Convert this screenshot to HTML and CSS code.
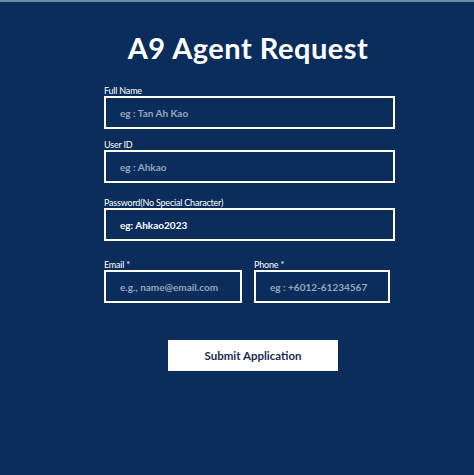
FILE: index.html
```html
<!DOCTYPE html>
<html>
<head>
<meta charset="utf-8">
<link rel="stylesheet" href="styles.css">
</head>
<body>
<div class="page">
  <h1 class="title">A9 Agent Request</h1>
  <form class="form">
    <div class="group g1">
      <label class="label">Full Name</label>
      <div class="field"><span class="ph">eg : Tan Ah Kao</span></div>
    </div>
    <div class="group g2">
      <label class="label">User ID</label>
      <div class="field"><span class="ph">eg : Ahkao</span></div>
    </div>
    <div class="group g3">
      <label class="label">Password(No Special Character)</label>
      <div class="field"><span class="val">eg: Ahkao2023</span></div>
    </div>
    <div class="row g4">
      <div class="group email">
        <label class="label">Email *</label>
        <div class="field"><span class="ph">e.g., name@email.com</span></div>
      </div>
      <div class="group phone">
        <label class="label">Phone *</label>
        <div class="field"><span class="ph">eg : +6012-61234567</span></div>
      </div>
    </div>
    <div class="actions">
      <button type="button" class="submit">Submit Application</button>
    </div>
  </form>
</div>
</body>
</html>
```
FILE: styles.css
```css
html, body {
  margin: 0;
  padding: 0;
  background: #0b2d5c;
}
body {
  border-top: 2px solid #7088aa;
  height: 473px;
  overflow: hidden;
  font-family: Lato, "Liberation Sans", sans-serif;
  color: #ffffff;
}
.page {
  padding-top: 29px;
}
.title {
  margin: 0 0 0 22px;
  text-align: center;
  font-size: 29px;
  line-height: 34px;
  font-weight: 700;
  letter-spacing: 0.5px;
}
.form {
  width: 291px;
  margin-left: 104px;
  margin-top: 20px;
}
.group {
  display: flex;
  flex-direction: column;
}
.label {
  font-size: 9px;
  line-height: 11px;
  font-weight: 400;
  color: #ffffff;
  letter-spacing: -0.2px;
}
.field {
  height: 29px;
  border: 2px solid #ffffff;
  display: flex;
  align-items: center;
  padding-left: 14px;
  font-size: 10px;
  font-weight: 700;
}
.ph {
  color: #97a6bd;
}
.val {
  color: #ffffff;
}
.g2 { margin-top: 10px; }
.g3 { margin-top: 14px; }
.g4 { margin-top: 18px; }
.row {
  display: flex;
  gap: 12px;
}
.email { width: 138px; }
.phone { width: 136px; }
.actions {
  margin-top: 37px;
  padding-left: 64px;
}
.submit {
  width: 170px;
  height: 31px;
  border: none;
  background: #ffffff;
  color: #1b2c50;
  font-family: Lato, "Liberation Sans", sans-serif;
  font-size: 11.5px;
  font-weight: 700;
  cursor: pointer;
}
```
